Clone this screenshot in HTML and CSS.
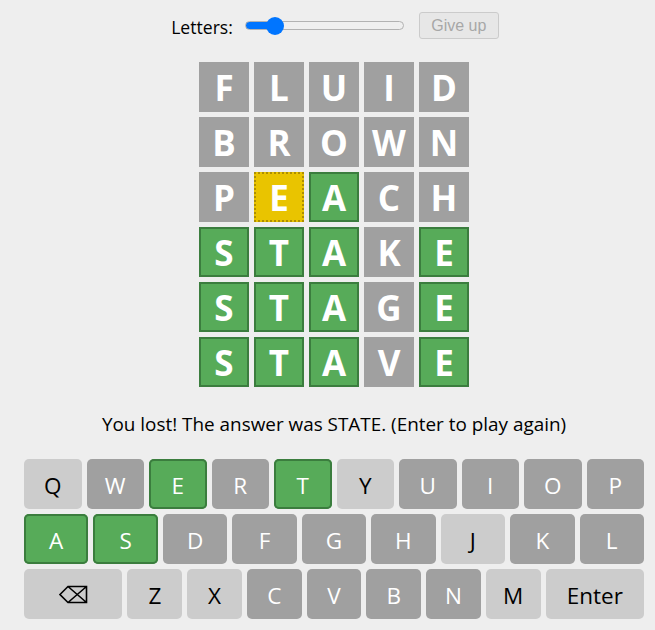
FILE: index.html
```html
<!DOCTYPE html>
<html lang="en">
<head>
<meta charset="utf-8">
<title>Wordle</title>
<link rel="stylesheet" href="styles.css">
</head>
<body>
<div class="app">
  <div class="top">
    <label class="letters-label" for="letters">Letters:</label>
    <input id="letters" class="slider" type="range" min="4" max="11" value="5">
    <button class="giveup" disabled>Give up</button>
  </div>

  <div class="board">
    <div class="tile absent">F</div><div class="tile absent">L</div><div class="tile absent">U</div><div class="tile absent">I</div><div class="tile absent">D</div>
    <div class="tile absent">B</div><div class="tile absent">R</div><div class="tile absent">O</div><div class="tile absent">W</div><div class="tile absent">N</div>
    <div class="tile absent">P</div><div class="tile present">E</div><div class="tile correct">A</div><div class="tile absent">C</div><div class="tile absent">H</div>
    <div class="tile correct">S</div><div class="tile correct">T</div><div class="tile correct">A</div><div class="tile absent">K</div><div class="tile correct">E</div>
    <div class="tile correct">S</div><div class="tile correct">T</div><div class="tile correct">A</div><div class="tile absent">G</div><div class="tile correct">E</div>
    <div class="tile correct">S</div><div class="tile correct">T</div><div class="tile correct">A</div><div class="tile absent">V</div><div class="tile correct">E</div>
  </div>

  <p class="message">You lost! The answer was STATE. (Enter to play again)</p>

  <div class="keyboard">
    <div class="krow">
      <div class="key unused">Q</div><div class="key absent">W</div><div class="key correct">E</div><div class="key absent">R</div><div class="key correct">T</div><div class="key unused">Y</div><div class="key absent">U</div><div class="key absent">I</div><div class="key absent">O</div><div class="key absent">P</div>
    </div>
    <div class="krow">
      <div class="key correct">A</div><div class="key correct">S</div><div class="key absent">D</div><div class="key absent">F</div><div class="key absent">G</div><div class="key absent">H</div><div class="key unused">J</div><div class="key absent">K</div><div class="key absent">L</div>
    </div>
    <div class="krow">
      <div class="key unused wide"><svg class="bksp" width="29" height="19" viewBox="0 0 29 19" aria-label="Backspace"><path d="M1 9.5 L9 1.5 H27.5 V17.5 H9 Z M9 1.5 L27.5 17.5 M9 17.5 L27.5 1.5" fill="none" stroke="#000" stroke-width="1.6" stroke-linejoin="miter"/></svg></div><div class="key unused">Z</div><div class="key unused">X</div><div class="key absent">C</div><div class="key absent">V</div><div class="key absent">B</div><div class="key absent">N</div><div class="key unused">M</div><div class="key unused wide">Enter</div>
    </div>
  </div>
</div>
</body>
</html>
```

FILE: styles.css
```css
html, body {
  margin: 0;
  padding: 0;
  background: #eeeeee;
}

body {
  font-family: "Open Sans", "Noto Sans", sans-serif;
  color: #000;
}

.app {
  width: 620px;
  margin-left: 24px;
}

.top {
  display: flex;
  justify-content: center;
  align-items: center;
  padding-top: 12px;
  height: 27px;
  margin-left: 2px;
}

.letters-label {
  font-size: 17.6px;
  margin-right: 12px;
  line-height: 27px;
  padding-top: 3px;
}

.slider {
  -webkit-appearance: none;
  appearance: none;
  width: 159px;
  height: 20px;
  margin: 0 15px 0 0;
  background: transparent;
  padding: 0;
}

.slider::-webkit-slider-runnable-track {
  height: 9px;
  box-sizing: border-box;
  border-radius: 5px;
  border: 1px solid #b2b2b2;
  background: linear-gradient(to right, #0075ff 0, #0075ff 28px, #efefef 28px);
}

.slider::-webkit-slider-thumb {
  -webkit-appearance: none;
  appearance: none;
  width: 18px;
  height: 18px;
  border-radius: 50%;
  background: #0075ff;
  border: none;
  margin-top: -5.5px;
}

.giveup {
  width: 80px;
  height: 27px;
  box-sizing: border-box;
  font-family: "Liberation Sans", Arial, sans-serif;
  font-size: 16px;
  color: #a7a7a7;
  background: #e7e7e7;
  border: 1px solid #cbcbcb;
  border-radius: 3px;
  padding: 0;
}

.board {
  display: grid;
  grid-template-columns: repeat(5, 50px);
  grid-auto-rows: 50px;
  gap: 5px;
  justify-content: center;
  margin-top: 23px;
}

.tile {
  box-sizing: border-box;
  display: flex;
  align-items: center;
  justify-content: center;
  font-weight: 700;
  font-size: 35px;
  color: #fff;
  line-height: 1;
  padding-top: 1px;
}

.tile.absent {
  background: #a0a0a0;
}

.tile.correct {
  background: #57ab59;
  border: 2px solid #3b7d3e;
}

.tile.present {
  background: #e9c400;
  border: 2px dotted #ad8e00;
}

.message {
  margin: 23px 0 21px;
  text-align: center;
  font-size: 18.9px;
  line-height: 28px;
}

.keyboard {
  display: flex;
  flex-direction: column;
  gap: 5px;
}

.krow {
  display: flex;
  gap: 5px;
}

.key {
  flex: 1 1 0;
  min-width: 0;
  height: 50px;
  box-sizing: border-box;
  border-radius: 5px;
  display: flex;
  align-items: center;
  justify-content: center;
  font-size: 22.5px;
  padding-top: 3px;
}

.key.wide {
  flex-grow: 1.8;
}

.key.unused {
  background: #cccccc;
  color: #000;
}

.key.absent {
  background: #a0a0a0;
  color: #fff;
}

.key.correct {
  background: #57ab59;
  box-shadow: inset 0 0 0 2px #3b7d3e;
  color: #fff;
}

.bksp {
  display: block;
  margin-top: -3px;
}
```
